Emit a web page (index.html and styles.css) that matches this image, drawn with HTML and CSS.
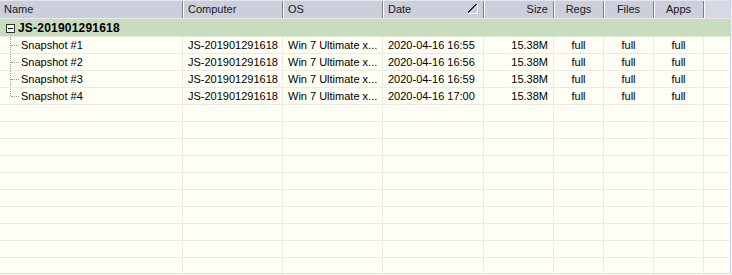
FILE: index.html
```html
<!DOCTYPE html>
<html lang="en">

<head>
    <meta charset="UTF-8">
    <title>Snapshots</title>
    <link rel="stylesheet" href="styles.css">
</head>

<body>
    <div class="grid">
        <!-- Column headers -->
        <div class="row head">
            <div class="cell c-name">Name</div>
            <div class="cell c-comp">Computer</div>
            <div class="cell c-os">OS</div>
            <div class="cell c-date">Date <span class="sort"></span></div>
            <div class="cell c-size right">Size</div>
            <div class="cell c-regs center">Regs</div>
            <div class="cell c-files center">Files</div>
            <div class="cell c-apps center">Apps</div>
            <div class="cell c-fill"></div>
        </div>

        <!-- Group row -->
        <div class="row group">
            <div class="cell group-name"><span class="toggle"></span>JS-201901291618</div>
        </div>

        <div class="row item">
            <div class="cell c-name leaf">Snapshot #1</div>
            <div class="cell c-comp">JS-201901291618</div>
            <div class="cell c-os">Win 7 Ultimate x...</div>
            <div class="cell c-date">2020-04-16 16:55</div>
            <div class="cell c-size right">15.38M</div>
            <div class="cell c-regs center">full</div>
            <div class="cell c-files center">full</div>
            <div class="cell c-apps center">full</div>
            <div class="cell c-fill"></div>
        </div>
        <div class="row item">
            <div class="cell c-name leaf">Snapshot #2</div>
            <div class="cell c-comp">JS-201901291618</div>
            <div class="cell c-os">Win 7 Ultimate x...</div>
            <div class="cell c-date">2020-04-16 16:56</div>
            <div class="cell c-size right">15.38M</div>
            <div class="cell c-regs center">full</div>
            <div class="cell c-files center">full</div>
            <div class="cell c-apps center">full</div>
            <div class="cell c-fill"></div>
        </div>
        <div class="row item">
            <div class="cell c-name leaf">Snapshot #3</div>
            <div class="cell c-comp">JS-201901291618</div>
            <div class="cell c-os">Win 7 Ultimate x...</div>
            <div class="cell c-date">2020-04-16 16:59</div>
            <div class="cell c-size right">15.38M</div>
            <div class="cell c-regs center">full</div>
            <div class="cell c-files center">full</div>
            <div class="cell c-apps center">full</div>
            <div class="cell c-fill"></div>
        </div>
        <div class="row item">
            <div class="cell c-name leaf last">Snapshot #4</div>
            <div class="cell c-comp">JS-201901291618</div>
            <div class="cell c-os">Win 7 Ultimate x...</div>
            <div class="cell c-date">2020-04-16 17:00</div>
            <div class="cell c-size right">15.38M</div>
            <div class="cell c-regs center">full</div>
            <div class="cell c-files center">full</div>
            <div class="cell c-apps center">full</div>
            <div class="cell c-fill"></div>
        </div>

        <!-- Empty rows -->
        <div class="row item empty"><div class="cell c-name"></div><div class="cell c-comp"></div><div class="cell c-os"></div><div class="cell c-date"></div><div class="cell c-size"></div><div class="cell c-regs"></div><div class="cell c-files"></div><div class="cell c-apps"></div><div class="cell c-fill"></div></div>
        <div class="row item empty"><div class="cell c-name"></div><div class="cell c-comp"></div><div class="cell c-os"></div><div class="cell c-date"></div><div class="cell c-size"></div><div class="cell c-regs"></div><div class="cell c-files"></div><div class="cell c-apps"></div><div class="cell c-fill"></div></div>
        <div class="row item empty"><div class="cell c-name"></div><div class="cell c-comp"></div><div class="cell c-os"></div><div class="cell c-date"></div><div class="cell c-size"></div><div class="cell c-regs"></div><div class="cell c-files"></div><div class="cell c-apps"></div><div class="cell c-fill"></div></div>
        <div class="row item empty"><div class="cell c-name"></div><div class="cell c-comp"></div><div class="cell c-os"></div><div class="cell c-date"></div><div class="cell c-size"></div><div class="cell c-regs"></div><div class="cell c-files"></div><div class="cell c-apps"></div><div class="cell c-fill"></div></div>
        <div class="row item empty"><div class="cell c-name"></div><div class="cell c-comp"></div><div class="cell c-os"></div><div class="cell c-date"></div><div class="cell c-size"></div><div class="cell c-regs"></div><div class="cell c-files"></div><div class="cell c-apps"></div><div class="cell c-fill"></div></div>
        <div class="row item empty"><div class="cell c-name"></div><div class="cell c-comp"></div><div class="cell c-os"></div><div class="cell c-date"></div><div class="cell c-size"></div><div class="cell c-regs"></div><div class="cell c-files"></div><div class="cell c-apps"></div><div class="cell c-fill"></div></div>
        <div class="row item empty"><div class="cell c-name"></div><div class="cell c-comp"></div><div class="cell c-os"></div><div class="cell c-date"></div><div class="cell c-size"></div><div class="cell c-regs"></div><div class="cell c-files"></div><div class="cell c-apps"></div><div class="cell c-fill"></div></div>
        <div class="row item empty"><div class="cell c-name"></div><div class="cell c-comp"></div><div class="cell c-os"></div><div class="cell c-date"></div><div class="cell c-size"></div><div class="cell c-regs"></div><div class="cell c-files"></div><div class="cell c-apps"></div><div class="cell c-fill"></div></div>
        <div class="row item empty"><div class="cell c-name"></div><div class="cell c-comp"></div><div class="cell c-os"></div><div class="cell c-date"></div><div class="cell c-size"></div><div class="cell c-regs"></div><div class="cell c-files"></div><div class="cell c-apps"></div><div class="cell c-fill"></div></div>
        <div class="row item empty"><div class="cell c-name"></div><div class="cell c-comp"></div><div class="cell c-os"></div><div class="cell c-date"></div><div class="cell c-size"></div><div class="cell c-regs"></div><div class="cell c-files"></div><div class="cell c-apps"></div><div class="cell c-fill"></div></div>
    </div>
</body>

</html>
```

FILE: styles.css
```css
* {
    margin: 0;
    padding: 0;
    box-sizing: border-box;
}

body {
    width: 732px;
    height: 275px;
    overflow: hidden;
    background: #f4f4f0;
    font-family: "Liberation Sans", Arial, sans-serif;
    font-size: 11px;
    color: #000;
}

.grid {
    width: 731px;
    height: 274px;
    background: #fefef5;
    border-right: 1px solid #c8d0e0;
    border-bottom: 1px solid #e0e0e0;
    overflow: hidden;
}

.row {
    display: flex;
    white-space: nowrap;
}

.cell {
    flex: none;
    padding: 0 5px;
    overflow: hidden;
    line-height: 16px;
}

.right {
    text-align: right;
}

.center {
    text-align: center;
}

/* column widths */
.c-name { width: 183px; }
.c-comp { width: 100px; }
.c-os { width: 100px; }
.c-date { width: 101px; }
.c-size { width: 70px; }
.c-regs { width: 50px; }
.c-files { width: 50px; }
.c-apps { width: 50px; }
.c-fill { flex: 1; }

/* header */
.head {
    height: 19px;
    background: #cbcedb;
    border-top: 1px solid #e4e6ee;
    border-bottom: 1px solid #e8e8ee;
}

.head .cell {
    height: 17px;
    border-right: 1px solid #7c7f8a;
    box-shadow: inset 1px 0 0 #ffffff;
    line-height: 16px;
    color: #1a1a1a;
}

.head .c-name {
    box-shadow: none;
    padding-left: 4px;
}

.head .c-fill {
    border-right: none;
    background: #d6d9e3;
}

.head .c-date {
    position: relative;
}

.sort {
    position: absolute;
    right: 5px;
    top: 3px;
    width: 10px;
    height: 10px;
    background: linear-gradient(to top left, transparent 45%, #2a2a40 46%, #2a2a40 56%, transparent 57%);
    border-bottom: 1px solid #f6f6fa;
    border-right: 1px solid #f6f6fa;
}

/* group row */
.group {
    height: 18px;
    background: #c8dcbe;
    border-bottom: 1px solid #e2ead8;
}

.group-name {
    padding: 1px 0 0 6px;
    font-weight: bold;
    font-size: 12px;
    letter-spacing: 0.2px;
    line-height: 17px;
    display: flex;
    align-items: center;
}

.toggle {
    position: relative;
    width: 9px;
    height: 9px;
    margin-right: 3px;
    border: 1px solid #303030;
    background: #f8f8f8;
}

.toggle::after {
    content: "";
    position: absolute;
    left: 1px;
    top: 3px;
    width: 5px;
    height: 1px;
    background: #000;
}

/* data rows */
.item {
    height: 17px;
    border-bottom: 1px solid #ebebe2;
}

.item .cell {
    border-right: 1px solid #ebebe2;
}

.item .c-fill {
    border-right: none;
}

.leaf {
    position: relative;
    padding-left: 21px;
}

.leaf::before {
    content: "";
    position: absolute;
    left: 10px;
    top: -1px;
    height: 18px;
    border-left: 1px dotted #9a9a9a;
}

.leaf.last::before {
    height: 9px;
}

.leaf::after {
    content: "";
    position: absolute;
    left: 11px;
    top: 8px;
    width: 8px;
    border-top: 1px dotted #9a9a9a;
}
```
